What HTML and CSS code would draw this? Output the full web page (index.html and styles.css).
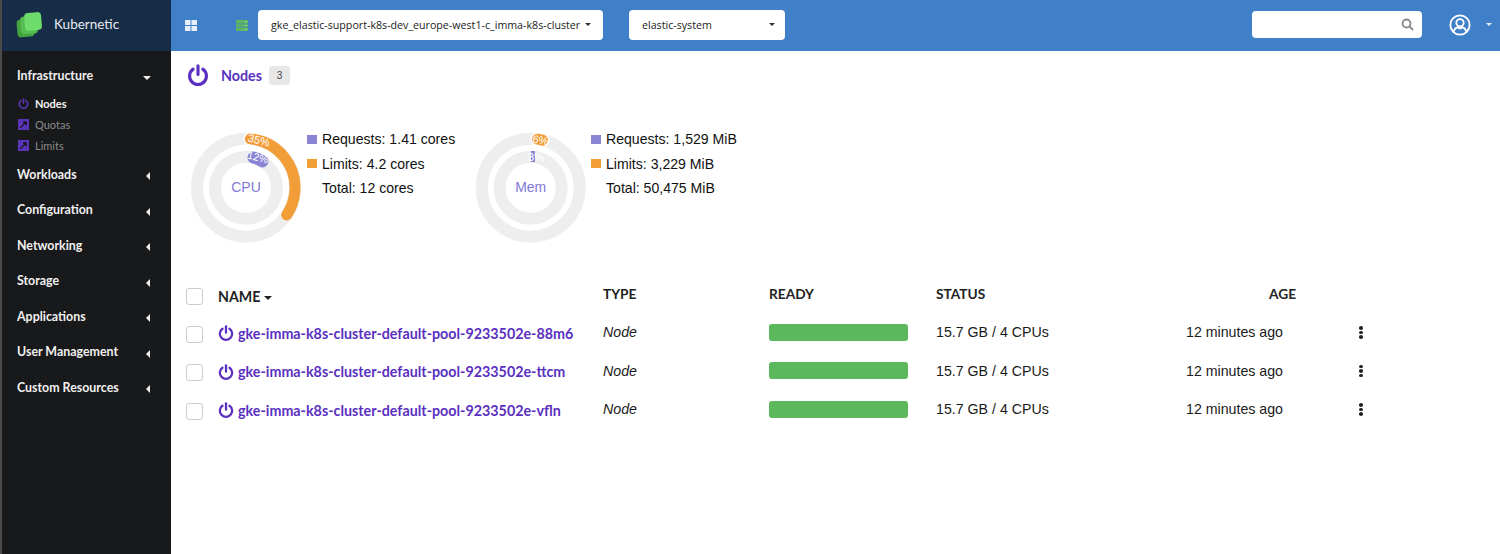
FILE: index.html
```html
<!DOCTYPE html>
<html lang="en">
<head>
    <meta charset="UTF-8">
    <title>Kubernetic</title>
    <link rel="stylesheet" href="styles.css">
</head>
<body>
    <svg class="defs" width="0" height="0">
        <symbol id="power" viewBox="0 0 24 24">
            <path d="M6.7 5.6a9.2 9.2 0 1 0 10.6 0" fill="none" stroke="currentColor" stroke-width="3.4" stroke-linecap="round"/>
            <path d="M12 2v9.5" fill="none" stroke="currentColor" stroke-width="3.4" stroke-linecap="round"/>
        </symbol>
        <symbol id="quota" viewBox="0 0 12 12">
            <path d="M0 0h12v12H0z" fill="#5a34b8"/>
            <path d="M2.5 9.5 8 4" stroke="#16161a" stroke-width="1.4"/>
            <path d="M5.5 3H9v3.5z" fill="#16161a" stroke="#16161a"/>
        </symbol>
    </svg>

    <aside class="sidebar">
        <div class="brand">
            <svg class="logo" width="28" height="28" viewBox="0 0 28 28">
                <rect x="1" y="7" width="17" height="18" rx="4" fill="#45a33f" transform="rotate(-5 9 16)"/>
                <rect x="4.5" y="4" width="17" height="18" rx="4" fill="#55bd52" transform="rotate(-5 13 13)"/>
                <rect x="8.5" y="0.5" width="17" height="18" rx="4" fill="#6ddc6b" transform="rotate(-5 17 9)"/>
            </svg>
            <span class="brand-name">Kubernetic</span>
        </div>
        <nav class="menu">
            <div class="group-head">Infrastructure <i class="caret-down"></i></div>
            <ul class="submenu">
                <li class="active"><svg class="sub-icon"><use href="#power"/></svg>Nodes</li>
                <li><svg class="sub-icon"><use href="#quota"/></svg>Quotas</li>
                <li><svg class="sub-icon"><use href="#quota"/></svg>Limits</li>
            </ul>
            <div class="group-head">Workloads <i class="caret-left"></i></div>
            <div class="group-head">Configuration <i class="caret-left"></i></div>
            <div class="group-head">Networking <i class="caret-left"></i></div>
            <div class="group-head">Storage <i class="caret-left"></i></div>
            <div class="group-head">Applications <i class="caret-left"></i></div>
            <div class="group-head">User Management <i class="caret-left"></i></div>
            <div class="group-head">Custom Resources <i class="caret-left"></i></div>
        </nav>
    </aside>

    <div class="main">
        <header class="topbar">
            <svg class="grid-icon" width="12" height="11" viewBox="0 0 12 11" fill="#e6effa">
                <path d="M0 0h5.5v5H0zM6.5 0H12v5H6.5zM0 6h5.5v5H0zM6.5 6H12v5H6.5z"/>
            </svg>
            <svg class="server-icon" width="12" height="11" viewBox="0 0 12 11" fill="#5cb85c">
                <path d="M0 1q0-1 1-1h10q1 0 1 1v2.5H0zM0 4.2h12v2.6H0zM0 7.5h12V10q0 1-1 1H1q-1 0-1-1z"/>
                <path d="M9 1.3h1.5v1H9zM9 5h1.5v1H9zM9 8.700h1.5v1H9z" fill="#a5dca5"/>
            </svg>
            <div class="select select-cluster">gke_elastic-support-k8s-dev_europe-west1-c_imma-k8s-cluster <i class="caret-small"></i></div>
            <div class="select select-ns">elastic-system <i class="caret-small"></i></div>
            <div class="search">
                <svg width="13" height="13" viewBox="0 0 13 13" fill="none" stroke="#8a8a8a" stroke-width="1.8">
                    <circle cx="5.5" cy="5.5" r="4"/><path d="M8.5 8.5l3.500 3.500"/>
                </svg>
            </div>
            <svg class="user-icon" width="22" height="22" viewBox="0 0 24 24" fill="none" stroke="#fff" stroke-width="2">
                <circle cx="12" cy="12" r="10.5"/>
                <circle cx="12" cy="9.5" r="4"/>
                <path d="M4.8 19.5q1.5-4.5 4.2-5l3 1.200 3-1.200q2.700.5 4.200 5"/>
            </svg>
            <i class="caret-user"></i>
        </header>

        <main class="content">
            <div class="page-title">
                <svg class="title-icon"><use href="#power"/></svg>
                <h1>Nodes</h1>
                <span class="count">3</span>
            </div>

            <section class="stats">
                <div class="stat">
                    <svg class="donut" width="112" height="112" viewBox="0 0 112 112">
                        <circle class="track" cx="56" cy="55.7" r="49"/>
                        <circle class="track" cx="56" cy="55.7" r="31"/>
                        <circle class="halo" cx="56" cy="55.7" r="49" pathLength="100" stroke-dasharray="3 97" transform="rotate(-85 56 55.7)"/>
                        <circle class="arc arc-limit" cx="56" cy="55.7" r="49" pathLength="100" stroke-dasharray="33 67" transform="rotate(-85 56 55.7)"/>
                        <circle class="arc arc-request" cx="56" cy="55.7" r="31" pathLength="100" stroke-dasharray="5 95" transform="rotate(-76 56 55.7)"/>
                        <text class="pct" x="69" y="12" transform="rotate(14 69 8)">35%</text>
                        <text class="pct pct-small" x="68" y="29" transform="rotate(14 68 25)">12%</text>
                        <text class="donut-label" x="56" y="60">CPU</text>
                    </svg>
                    <ul class="legend">
                        <li><i class="swatch swatch-request"></i>Requests: 1.41 cores</li>
                        <li><i class="swatch swatch-limit"></i>Limits: 4.2 cores</li>
                        <li><i class="swatch"></i>Total: 12 cores</li>
                    </ul>
                </div>
                <div class="stat">
                    <svg class="donut" width="112" height="112" viewBox="0 0 112 112">
                        <circle class="track" cx="55.7" cy="55.7" r="49"/>
                        <circle class="track" cx="55.7" cy="55.7" r="31"/>
                        <circle class="halo" cx="55.7" cy="55.7" r="49" pathLength="100" stroke-dasharray="1.7 98.3" transform="rotate(-82 55.7 55.7)"/>
                        <circle class="arc arc-limit" cx="55.7" cy="55.7" r="49" pathLength="100" stroke-dasharray="1.7 98.3" transform="rotate(-82 55.7 55.7)"/>
                        <rect x="56" y="19" width="4" height="11" fill="#8a84d6"/>
                        <text class="pct" x="65.5" y="12" transform="rotate(10 65.5 8)">6%</text>
                        <text class="pct" x="61" y="29">3%</text>
                        <text class="donut-label" x="55.7" y="60">Mem</text>
                    </svg>
                    <ul class="legend">
                        <li><i class="swatch swatch-request"></i>Requests: 1,529 MiB</li>
                        <li><i class="swatch swatch-limit"></i>Limits: 3,229 MiB</li>
                        <li><i class="swatch"></i>Total: 50,475 MiB</li>
                    </ul>
                </div>
            </section>

            <div class="table">
                <div class="row row-head">
                    <span class="check"></span>
                    <span class="col-name">NAME <i class="caret-sort"></i></span>
                    <span class="col-up">TYPE</span>
                    <span class="col-up">READY</span>
                    <span class="col-up">STATUS</span>
                    <span class="col-up col-age">AGE</span>
                </div>
                <div class="row">
                    <span class="check"></span>
                    <a class="node-link"><svg class="node-icon"><use href="#power"/></svg>gke-imma-k8s-cluster-default-pool-9233502e-88m6</a>
                    <em>Node</em>
                    <span class="bar"></span>
                    <span>15.7 GB / 4 CPUs</span>
                    <span>12 minutes ago</span>
                    <span class="kebab"><i></i><i></i><i></i></span>
                </div>
                <div class="row">
                    <span class="check"></span>
                    <a class="node-link"><svg class="node-icon"><use href="#power"/></svg>gke-imma-k8s-cluster-default-pool-9233502e-ttcm</a>
                    <em>Node</em>
                    <span class="bar"></span>
                    <span>15.7 GB / 4 CPUs</span>
                    <span>12 minutes ago</span>
                    <span class="kebab"><i></i><i></i><i></i></span>
                </div>
                <div class="row">
                    <span class="check"></span>
                    <a class="node-link"><svg class="node-icon"><use href="#power"/></svg>gke-imma-k8s-cluster-default-pool-9233502e-vfln</a>
                    <em>Node</em>
                    <span class="bar"></span>
                    <span>15.7 GB / 4 CPUs</span>
                    <span>12 minutes ago</span>
                    <span class="kebab"><i></i><i></i><i></i></span>
                </div>
            </div>
        </main>
    </div>
</body>
</html>
```

FILE: styles.css
```css
* {
    box-sizing: border-box;
}
body {
    margin: 0;
    height: 554px;
    display: flex;
    overflow: hidden;
    background: #fff;
    font-family: "Liberation Sans", Arial, sans-serif;
    color: #222;
}
ul {
    margin: 0;
    padding: 0;
    list-style: none;
}
.defs {
    position: absolute;
}

/* sidebar */
.sidebar {
    width: 171px;
    flex: none;
    background: #18191b;
    border-left: 2px solid #4a4a4a;
    font-family: Lato, sans-serif;
}
.brand {
    height: 51px;
    padding-left: 14px;
    display: flex;
    align-items: center;
    gap: 10px;
    background: #162c47;
    color: #e8edf2;
    font-size: 13.5px;
}
.brand-name {
    margin-bottom: 3px;
}
.menu {
    padding-top: 7px;
}
.group-head {
    height: 35.5px;
    padding: 0 21px 0 15px;
    display: flex;
    align-items: center;
    justify-content: space-between;
    color: #f0f0f0;
    font-size: 12.4px;
    font-weight: 700;
}
.caret-down {
    border-top: 4px solid #eee;
    border-left: 4px solid transparent;
    border-right: 4px solid transparent;
    margin-top: 4px;
    margin-right: -1px;
}
.caret-left {
    border-right: 4px solid #eee;
    border-top: 4px solid transparent;
    border-bottom: 4px solid transparent;
    margin-top: 4px;
}
.submenu {
    margin-top: -1px;
    padding-bottom: 1px;
}
.submenu li {
    height: 21px;
    padding-left: 16px;
    display: flex;
    align-items: center;
    gap: 6px;
    color: #8b8b8b;
    font-size: 11px;
}
.submenu li.active {
    color: #f2f2f2;
    font-weight: 700;
}
.sub-icon {
    width: 11px;
    height: 11px;
    color: #5a34b8;
}

/* top bar */
.main {
    flex: 1;
    min-width: 0;
}
.topbar {
    height: 51px;
    padding-bottom: 2px;
    display: flex;
    align-items: center;
    background: #4080c8;
}
.grid-icon {
    margin: 2px 0 0 14px;
}
.server-icon {
    margin: 2px 0 0 39px;
}
.select {
    height: 30px;
    display: flex;
    align-items: center;
    justify-content: space-between;
    background: #fff;
    border-radius: 4px;
    color: #222;
    font-family: "Open Sans", sans-serif;
    font-size: 10.67px;
    white-space: nowrap;
}
.select-cluster {
    width: 345px;
    margin-left: 10px;
    padding: 0 12px 0 13px;
}
.select-ns {
    width: 156px;
    margin-left: 26px;
    padding: 0 10px 0 13px;
}
.caret-small {
    border-top: 3px solid #333;
    border-left: 3px solid transparent;
    border-right: 3px solid transparent;
}
.search {
    width: 170px;
    height: 27px;
    margin-left: auto;
    padding-right: 8px;
    display: flex;
    align-items: center;
    justify-content: flex-end;
    background: #fff;
    border-radius: 4px;
}
.user-icon {
    margin-left: 27px;
}
.caret-user {
    margin: 0 8px 0 15px;
    border-top: 3px solid #e8eef7;
    border-left: 3px solid transparent;
    border-right: 3px solid transparent;
}

/* content */
.content {
    padding-left: 15px;
}
.page-title {
    height: 48px;
    display: flex;
    align-items: center;
    color: #5a30c0;
}
.title-icon {
    width: 22px;
    height: 24px;
    margin-left: 1px;
}
.page-title h1 {
    margin: 0 0 0 12px;
    font-family: Lato, sans-serif;
    font-size: 14.3px;
    font-weight: 700;
}
.count {
    width: 21px;
    height: 19px;
    margin-left: 7px;
    display: flex;
    align-items: center;
    justify-content: center;
    background: #e8e8e8;
    border-radius: 3px;
    color: #444;
    font-size: 10px;
}
.stats {
    display: flex;
    margin: 33px 0 0 4px;
}
.stat {
    width: 285px;
    display: flex;
}
.stat + .stat .legend {
    margin-left: 4px;
}
.track {
    fill: none;
    stroke: #eee;
    stroke-width: 12;
}
.arc {
    fill: none;
    stroke-width: 11;
    stroke-linecap: round;
}
.arc-request {
    stroke: #8a84d6;
    stroke-width: 12;
}
.halo {
    fill: none;
    stroke: #fff;
    stroke-width: 14;
    stroke-linecap: round;
}
.arc-limit {
    stroke: #f29e38;
}
.pct {
    fill: #fff;
    font-size: 11px;
    text-anchor: middle;
}
.pct-small {
    font-size: 10.5px;
}
.donut-label {
    fill: #8079d6;
    font-size: 14px;
    text-anchor: middle;
}
.legend {
    margin: -5px 0 0 5px;
    font-size: 14.1px;
    color: #111;
}
.legend li {
    height: 24.5px;
    display: flex;
    align-items: center;
    white-space: nowrap;
}
.swatch {
    width: 10px;
    height: 9px;
    margin-right: 5px;
}
.swatch-request {
    background: #8a84d6;
}
.swatch-limit {
    background: #f29e38;
}

/* table */
.table {
    margin-top: 29px;
    font-size: 14.2px;
    color: #1a1a1a;
}
.row {
    height: 38.5px;
    display: grid;
    grid-template-columns: 32px 385px 166px 167px 250px 175px 20px;
    align-items: center;
}
.row-head {
    height: 40px;
    font-family: Lato, sans-serif;
    font-weight: 700;
    color: #222;
}
.check {
    width: 17px;
    height: 17px;
    margin-top: 4px;
    background: #fff;
    border: 1px solid #ccc;
    border-radius: 3px;
}
.row-head .check {
    margin-top: 7px;
}
.col-name {
    display: flex;
    align-items: center;
    gap: 4px;
    margin-top: 7px;
}
.col-up {
    padding-top: 1px;
    font-size: 13.7px;
}
.col-age {
    padding-left: 83px;
    white-space: nowrap;
}
.caret-sort {
    border-top: 4px solid #222;
    border-left: 4px solid transparent;
    border-right: 4px solid transparent;
    margin-top: 2px;
}
.node-link {
    display: flex;
    align-items: center;
    gap: 4px;
    margin-top: 2px;
    color: #5a30c0;
    font-family: Lato, sans-serif;
    font-size: 14.3px;
    font-weight: 700;
    white-space: nowrap;
}
.node-icon {
    width: 16px;
    height: 16px;
    flex: none;
}
.bar {
    width: 139px;
    height: 17px;
    background: #5cb85c;
    border-radius: 3px;
}
.kebab {
    display: flex;
    flex-direction: column;
    gap: 1px;
    width: 4px;
    margin-left: -2px;
}
.kebab i {
    width: 4px;
    height: 3.5px;
    background: #222;
    border-radius: 50%;
}
```
